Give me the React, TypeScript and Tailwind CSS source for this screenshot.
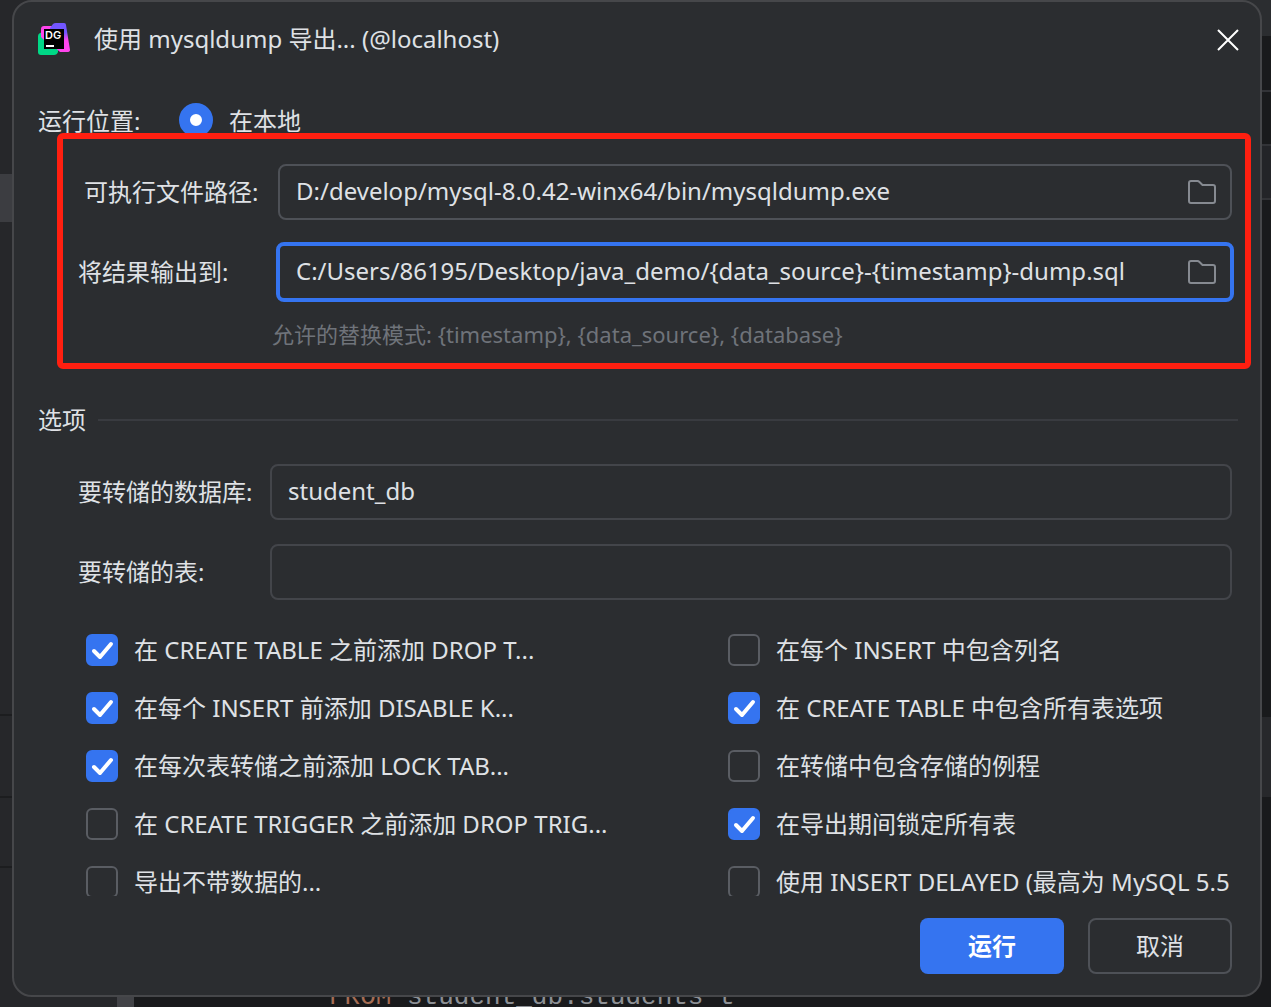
import { useState } from 'react';

interface DumpOption {
  id: string;
  label: string;
  checked: boolean;
}

const LEFT_OPTIONS: DumpOption[] = [
  { id: 'drop-table', label: '在 CREATE TABLE 之前添加 DROP T...', checked: true },
  { id: 'disable-keys', label: '在每个 INSERT 前添加 DISABLE K...', checked: true },
  { id: 'add-locks', label: '在每次表转储之前添加 LOCK TAB...', checked: true },
  { id: 'drop-trigger', label: '在 CREATE TRIGGER 之前添加 DROP TRIG...', checked: false },
  { id: 'no-data', label: '导出不带数据的...', checked: false },
];

const RIGHT_OPTIONS: DumpOption[] = [
  { id: 'complete-insert', label: '在每个 INSERT 中包含列名', checked: false },
  { id: 'create-options', label: '在 CREATE TABLE 中包含所有表选项', checked: true },
  { id: 'routines', label: '在转储中包含存储的例程', checked: false },
  { id: 'lock-tables', label: '在导出期间锁定所有表', checked: true },
  { id: 'delayed-insert', label: '使用 INSERT DELAYED (最高为 MySQL 5.5', checked: false },
];

const AppLogo = () => (
  <svg className="h-8 w-8 shrink-0" viewBox="0 0 32 32" aria-hidden="true">
    <defs>
      <linearGradient id="logo-violet" x1="0.4" y1="0" x2="0.65" y2="1">
        <stop offset="0.4" stopColor="#7256ff" />
        <stop offset="0.65" stopColor="#ff45ed" />
      </linearGradient>
    </defs>
    <path d="M0 13 Q0 11 2 10 L6 9 L20 22 V29 Q19 32 16 32 H3 Q0 32 0 29 Z" fill="#00d886" />
    <path d="M3 6 Q3 3 6 3 H17 V20 L8 19 L3 14 Z" fill="#ff45ed" />
    <path d="M12 5 L15 1 Q16 0 18 0 H26 Q28 0 28 2 L32 27 Q32 29 29 29 H22 L12 20 Z" fill="url(#logo-violet)" />
    <rect x="6" y="6" width="20" height="20" fill="#000" />
    <text x="7" y="16" fill="#fff" fontSize="11" fontWeight="600" fontFamily="Inter, sans-serif">DG</text>
    <rect x="8" y="22" width="8" height="2" fill="#fff" />
  </svg>
);

const FolderIcon = () => (
  <svg className="h-8 w-8" viewBox="0 0 32 32" fill="none" stroke="#868a91" strokeWidth="2" aria-hidden="true">
    <path d="M3 7 Q3 5 5 5 H11.5 Q12.5 5 13.2 5.7 L16.5 9 H27 Q29 9 29 11 V25 Q29 27 27 27 H5 Q3 27 3 25 Z" />
  </svg>
);

const PathField = ({ id, value, focused }: { id: string; value: string; focused?: boolean }) => {
  const [path, setPath] = useState(value);
  return (
    <div
      className={
        focused
          ? '-mx-[2px] flex h-[60px] min-w-0 flex-1 items-center rounded-lg border-4 border-[#3574f0] pl-4 pr-3'
          : 'flex h-14 min-w-0 flex-1 items-center rounded-lg border-2 border-[#4e5157] pl-4 pr-3'
      }
    >
      <input
        id={id}
        value={path}
        onChange={e => setPath(e.target.value)}
        className="min-w-0 flex-1 bg-transparent pb-[2px] outline-none"
      />
      <button type="button" aria-label="浏览">
        <FolderIcon />
      </button>
    </div>
  );
};

const OptionRow = ({ option }: { option: DumpOption }) => {
  const [checked, setChecked] = useState(option.checked);
  return (
    <div className="flex h-8 items-center gap-4 whitespace-nowrap">
      <span className="grid h-8 w-8 shrink-0">
        <input
          id={option.id}
          type="checkbox"
          checked={checked}
          onChange={e => setChecked(e.target.checked)}
          className="col-start-1 row-start-1 appearance-none rounded-md border-2 border-[#5a5d63] checked:border-[#3574f0] checked:bg-[#3574f0]"
        />
        {checked && (
          <svg className="pointer-events-none col-start-1 row-start-1 h-8 w-8" viewBox="0 0 32 32" fill="none" stroke="#fff" strokeWidth="4" strokeLinecap="round" strokeLinejoin="round" aria-hidden="true">
            <path d="M8 17 L14 23 L25 10" />
          </svg>
        )}
      </span>
      <label htmlFor={option.id}>{option.label}</label>
    </div>
  );
};

// Parts of the IDE window that stay visible around the dialog
const Backdrop = () => (
  <div className="absolute inset-0 flex justify-between bg-[#191a1c]" aria-hidden="true">
    <div className="flex w-[134px] flex-col bg-[#26272a]">
      <div className="mt-[174px] h-12 bg-[#3c3d41]" />
      <div className="mt-[492px] h-[2px] bg-[#1c1d1f]" />
      <div className="mt-20 h-[2px] bg-[#1c1d1f]" />
      <div className="mt-[68px] h-[2px] bg-[#1c1d1f]" />
      <div className="ml-[117px] flex-1 bg-[#424347]" />
    </div>
    <div className="flex flex-1 items-end overflow-hidden whitespace-pre pl-[195px] font-['Liberation_Mono',monospace] text-[26px] leading-5 text-[#8d9095]">
      <span className="text-[#a66d54]">FROM</span> student_db.students t
    </div>
    <div className="flex w-10 flex-col">
      <div className="h-9 bg-[#2b2d30]" />
      <div className="mt-[54px] h-[2px] bg-[#323337]" />
      <div className="mt-[52px] h-[2px] bg-[#323337]" />
      <div className="h-[52px] bg-[#232428]" />
      <div className="h-[2px] bg-[#323337]" />
      <div className="mt-[517px] h-20 bg-[#27282b]" />
    </div>
  </div>
);

const App = () => {
  const [database, setDatabase] = useState('student_db');
  const [tables, setTables] = useState('');

  return (
    <div className="relative min-h-screen overflow-hidden px-3 pb-[10px] pr-[9px] font-['Noto_Sans','Noto_Sans_CJK_SC',sans-serif] text-2xl text-[#dfe1e5]">
      <Backdrop />

      <main role="dialog" aria-labelledby="dialog-title" className="relative rounded-[20px] border-2 border-[#46474a] bg-[#2b2d30] pb-[21px] pl-6 pr-[22px]">
        <header className="flex h-[74px] items-center">
          <AppLogo />
          <h1 id="dialog-title" className="ml-6 flex-1">使用 mysqldump 导出... (@localhost)</h1>
          <button type="button" aria-label="关闭" className="-mr-[6px] p-1">
            <svg className="h-6 w-6" viewBox="0 0 24 24" stroke="#fff" strokeWidth="2" aria-hidden="true">
              <path d="M2 3 L22 23 M22 3 L2 23" />
            </svg>
          </button>
        </header>

        <div className="flex h-[61px] items-end">
          <span className="w-[141px]">运行位置:</span>
          <input id="run-local" type="radio" name="target" defaultChecked className="h-[34px] w-[34px] appearance-none rounded-full border-[11px] border-[#3574f0] bg-white" />
          <label htmlFor="run-local" className="ml-4">在本地</label>
        </div>

        <section className="relative -mr-[13px] -mt-1 ml-[19px] rounded-md border-[6px] border-[#ff1f10] pb-[13px] pl-[15px] pr-[13px] pt-[25px]">
          <div className="flex items-center">
            <label htmlFor="executable" className="w-[200px] pl-[6px]">可执行文件路径:</label>
            <PathField id="executable" value="D:/develop/mysql-8.0.42-winx64/bin/mysqldump.exe" />
          </div>
          <div className="mt-[22px] flex items-center">
            <label htmlFor="output" className="w-[200px]">将结果输出到:</label>
            <PathField id="output" value="C:/Users/86195/Desktop/java_demo/{data_source}-{timestamp}-dump.sql" focused />
          </div>
          <p className="ml-[194px] mt-4 text-[22px] leading-8 text-[#6f737a]">允许的替换模式: {'{timestamp}, {data_source}, {database}'}</p>
        </section>

        <section>
          <div className="mt-[35px] flex items-center gap-3">
            <h2>选项</h2>
            <hr className="flex-1 border-t-2 border-[#393b40]" />
          </div>
          <div className="mr-[6px] mt-7 flex flex-col gap-6 pl-10">
            <div className="flex items-center">
              <label htmlFor="database" className="w-48">要转储的数据库:</label>
              <input id="database" value={database} onChange={e => setDatabase(e.target.value)} className="h-14 min-w-0 flex-1 rounded-lg border-2 border-[#43454a] px-4 pb-1 outline-none" />
            </div>
            <div className="flex items-center">
              <label htmlFor="tables" className="w-48">要转储的表:</label>
              <input id="tables" value={tables} onChange={e => setTables(e.target.value)} className="h-14 min-w-0 flex-1 rounded-lg border-2 border-[#43454a] px-4 pb-1 outline-none" />
            </div>
          </div>
          <div className="mt-[34px] grid h-[262px] grid-cols-[642px_1fr] overflow-hidden pl-12">
            <div className="flex flex-col gap-[26px]">
              {LEFT_OPTIONS.map(option => <OptionRow key={option.id} option={option} />)}
            </div>
            <div className="flex min-w-0 flex-col gap-[26px]">
              {RIGHT_OPTIONS.map(option => <OptionRow key={option.id} option={option} />)}
            </div>
          </div>
        </section>

        <footer className="mr-[6px] mt-[22px] flex justify-end gap-6">
          <button type="button" className="h-14 w-36 rounded-lg bg-[#3574f0] font-bold text-white">运行</button>
          <button type="button" className="h-14 w-36 rounded-lg border-2 border-[#4e5157]">取消</button>
        </footer>
      </main>
    </div>
  );
};

export default App;
